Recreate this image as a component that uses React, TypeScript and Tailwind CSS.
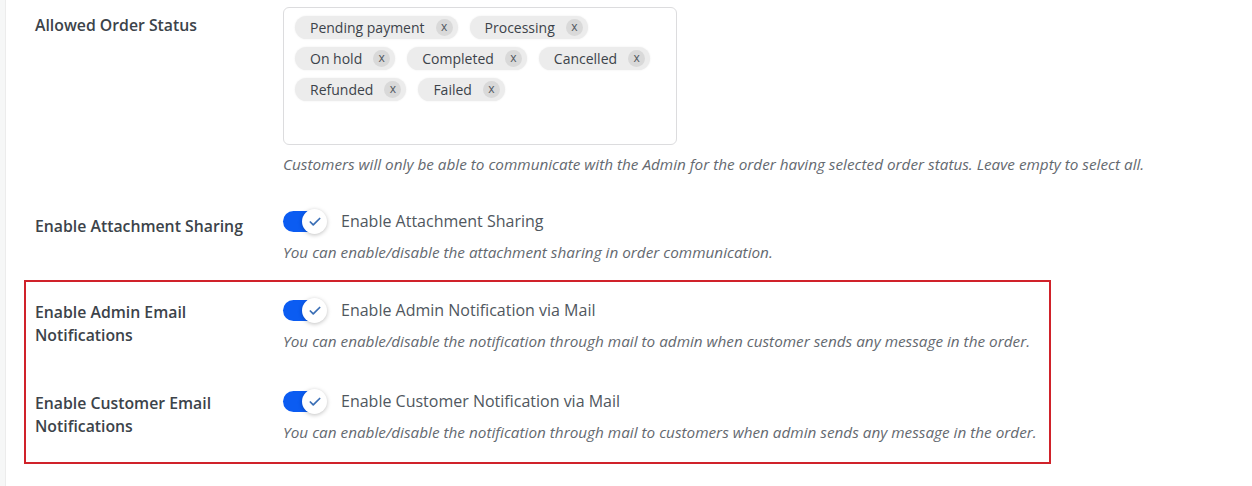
import { Check } from "lucide-react";

const statuses = [
  ["Pending payment", "Processing"],
  ["On hold", "Completed", "Cancelled"],
  ["Refunded", "Failed"],
];

function Tag({ label }: { label: string }) {
  return (
    <span className="flex h-[23px] items-center rounded-full bg-[#ececec] pl-[15px] pr-[5px] text-[14px] text-[#3c434a] shadow-[0_0_2px_rgba(0,0,0,0.08)]">
      {label}
      <span className="ml-[11px] flex h-[17px] w-[17px] items-center justify-center rounded-full bg-[#d9d9d9] pb-[2px] text-[12px] leading-none text-[#50575e]">
        x
      </span>
    </span>
  );
}

function Toggle() {
  return (
    <span className="relative block h-[24px] w-[44px] shrink-0">
      <span className="absolute left-0 top-[2px] h-[21px] w-[36px] rounded-full bg-[#0b5cf2]" />
      <span className="absolute left-[19px] top-0 flex h-[25px] w-[25px] items-center justify-center rounded-full bg-white shadow-[0_1px_4px_rgba(0,0,0,0.25)]">
        <Check className="h-[14px] w-[14px] text-[#3b6fb6]" strokeWidth={3} />
      </span>
    </span>
  );
}

function ToggleRow({
  label,
  text,
  help,
  labelTop,
}: {
  label: React.ReactNode;
  text: string;
  help: string;
  labelTop: string;
}) {
  return (
    <div className="grid grid-cols-[248px_1fr]">
      <div className={`${labelTop} text-[15.8px] font-semibold leading-[23px] text-[#3c434a]`}>{label}</div>
      <div className="flex flex-col">
        <div className="flex h-[26px] items-center gap-[14px]">
          <Toggle />
          <span className="text-[16px] text-[#50575e]">{text}</span>
        </div>
        <p className="mt-[8px] text-[15.3px] italic leading-[20px] text-[#646970]">{help}</p>
      </div>
    </div>
  );
}

export default function App() {
  return (
    <div className="flex h-[486px] w-[1252px] bg-white font-['Open_Sans',sans-serif]">
      <div className="w-[6px] shrink-0 border-r border-[#ececec] bg-[#f6f7f7]" />
      <div className="flex-1">
        <div className="pl-[29px] pt-[7px]">
          <div className="grid grid-cols-[248px_1fr]">
            <div className="mt-[7px] text-[15.8px] font-semibold leading-[23px] text-[#3c434a]">
              Allowed Order Status
            </div>
            <div>
              <div className="h-[138px] w-[394px] rounded-[6px] border border-[#dcdcde] px-[11px] pt-[8px]">
                <div className="flex flex-col gap-[8px]">
                  {statuses.map((row, i) => (
                    <div key={i} className="flex gap-[12px]">
                      {row.map((s) => (
                        <Tag key={s} label={s} />
                      ))}
                    </div>
                  ))}
                </div>
              </div>
              <p className="mt-[9px] text-[15.3px] italic leading-[20px] text-[#646970]">
                Customers will only be able to communicate with the Admin for the order having selected order
                status. Leave empty to select all.
              </p>
            </div>
          </div>

          <div className="mt-[34px]">
            <ToggleRow
              labelTop="mt-[7px]"
              label="Enable Attachment Sharing"
              text="Enable Attachment Sharing"
              help="You can enable/disable the attachment sharing in order communication."
            />
          </div>
        </div>

        <div className="ml-[18px] mt-[18px] w-[1027px] border-2 border-[#d0222a] pb-[20px] pl-[9px] pt-[15px]">
          <ToggleRow
            labelTop="mt-[4px]"
            label={
              <>
                Enable Admin Email
                <br />
                Notifications
              </>
            }
            text="Enable Admin Notification via Mail"
            help="You can enable/disable the notification through mail to admin when customer sends any message in the order."
          />
          <div className="mt-[37px]">
            <ToggleRow
              labelTop="mt-[4px]"
              label={
                <>
                  Enable Customer Email
                  <br />
                  Notifications
                </>
              }
              text="Enable Customer Notification via Mail"
              help="You can enable/disable the notification through mail to customers when admin sends any message in the order."
            />
          </div>
        </div>
      </div>
    </div>
  );
}
